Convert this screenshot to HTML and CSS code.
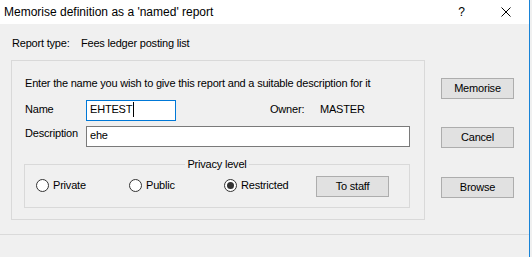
FILE: index.html
```html
<!DOCTYPE html>
<html lang="en">
<head>
  <meta charset="UTF-8" />
  <title>Memorise definition as a 'named' report</title>
  <link rel="stylesheet" href="styles.css">
</head>
<body>
<div class="dialog">
  <div class="titlebar">
    <span class="title">Memorise definition as a 'named' report</span>
    <span class="tb-btn help">?</span>
    <span class="tb-btn close">
      <svg width="10" height="10" viewBox="0 0 10 10"><path d="M0.5 0.5 L9.5 9.5 M9.5 0.5 L0.5 9.5" stroke="#000" stroke-width="1" fill="none"/></svg>
    </span>
  </div>

  <div class="content">
    <div class="main">
      <div class="report-type">
        <span class="rt-label">Report type:</span><span>Fees ledger posting list</span>
      </div>

      <div class="frame">
        <p class="intro">Enter the name you wish to give this report and a suitable description for it</p>

        <div class="row name-row">
          <span class="field-label">Name</span>
          <div class="input focused">EHTEST<span class="caret"></span></div>
          <span class="owner-label">Owner:</span>
          <span class="owner-value">MASTER</span>
        </div>

        <div class="row desc-row">
          <span class="field-label">Description</span>
          <div class="input wide">ehe</div>
        </div>

        <fieldset class="privacy">
          <legend>Privacy level</legend>
          <div class="privacy-row">
            <span class="radio"><span class="dot"></span>Private</span>
            <span class="radio"><span class="dot"></span>Public</span>
            <span class="radio"><span class="dot checked"></span>Restricted</span>
            <span class="btn">To staff</span>
          </div>
        </fieldset>
      </div>
    </div>

    <div class="side">
      <span class="btn">Memorise</span>
      <span class="btn cancel">Cancel</span>
      <span class="btn browse">Browse</span>
    </div>
  </div>

  <div class="footer"></div>
</div>
</body>
</html>
```

FILE: styles.css
```css
body {
  margin: 0;
  width: 532px;
  height: 257px;
  overflow: hidden;
  background-color: #f0f0f0;
  font-family: "Liberation Sans", Arial, sans-serif;
  font-size: 11px;
  line-height: 13px;
  letter-spacing: -0.2px;
  color: #000;
}

.dialog {
  width: 530px;
  height: 257px;
  box-sizing: border-box;
  border-right: 1px solid #1883d7;
  display: flex;
  flex-direction: column;
}

/* title bar */
.titlebar {
  height: 24px;
  background-color: #fff;
  display: flex;
  align-items: stretch;
  flex-shrink: 0;
  letter-spacing: 0;
}

.title {
  flex: 1;
  padding-left: 4px;
  font-size: 12px;
  line-height: 24px;
}

.tb-btn {
  width: 46px;
  display: flex;
  align-items: center;
  justify-content: center;
}

.help {
  font-size: 12px;
  padding-left: 3px;
  box-sizing: border-box;
}

.close svg {
  display: block;
}

/* body */
.content {
  height: 210px;
  display: flex;
  flex-shrink: 0;
}

.main {
  padding-left: 11px;
  width: 414px;
}

.report-type {
  margin-top: 13px;
  padding-left: 1px;
}

.rt-label {
  display: inline-block;
  width: 69px;
}

.frame {
  margin-top: 10px;
  box-sizing: border-box;
  width: 414px;
  height: 160px;
  border: 1px solid #d9d9d9;
  padding: 16px 0 0 13px;
}

.intro {
  margin: 0;
}

.row {
  display: flex;
  align-items: flex-start;
}

.name-row {
  margin-top: 10px;
}

.desc-row {
  margin-top: 5px;
}

.field-label {
  width: 61px;
  margin-top: 3px;
}

.desc-row .field-label {
  margin-top: 1px;
}

.input {
  box-sizing: border-box;
  width: 90px;
  height: 21px;
  border: 1px solid #7a7a7a;
  background-color: #fff;
  padding: 2px 0 0 3px;
  display: flex;
  align-items: flex-start;
}

.input.focused {
  border-color: #0078d7;
}

.input.wide {
  width: 324px;
}

.caret {
  width: 1px;
  height: 15px;
  margin-top: -1px;
  margin-left: 1px;
  background-color: #000;
}

.owner-label {
  margin-left: 94px;
  margin-top: 3px;
  width: 50px;
}

.owner-value {
  margin-top: 3px;
}

/* privacy group */
.privacy {
  margin: 11px 0 0 -1px;
  padding: 0 0 10px 0;
  width: 386px;
  box-sizing: border-box;
  border: 1px solid #d9d9d9;
  min-inline-size: 0;
}

.privacy legend {
  margin: 0 auto;
  padding: 0 2px;
  line-height: 12px;
}

.privacy-row {
  padding: 6px 0 0 11px;
  display: grid;
  grid-template-columns: 93px 95px 92px 73px;
  align-items: start;
}

.radio {
  display: flex;
  align-items: flex-start;
  margin-top: 3px;
}

.dot {
  width: 13px;
  height: 13px;
  box-sizing: border-box;
  border: 1px solid #333;
  border-radius: 50%;
  background-color: #fff;
  margin-right: 4px;
  display: flex;
  align-items: center;
  justify-content: center;
}

.dot.checked::after {
  content: "";
  width: 7px;
  height: 7px;
  border-radius: 50%;
  background-color: #333;
}

/* buttons */
.btn {
  box-sizing: border-box;
  width: 73px;
  height: 21px;
  border: 1px solid #adadad;
  background-color: #e1e1e1;
  display: flex;
  align-items: center;
  justify-content: center;
}

.side {
  margin-left: 16px;
  padding-top: 54px;
  display: flex;
  flex-direction: column;
}

.cancel {
  margin-top: 28px;
}

.browse {
  margin-top: 29px;
}

.footer {
  flex: 1;
  border-top: 1px solid #dadada;
}
```
